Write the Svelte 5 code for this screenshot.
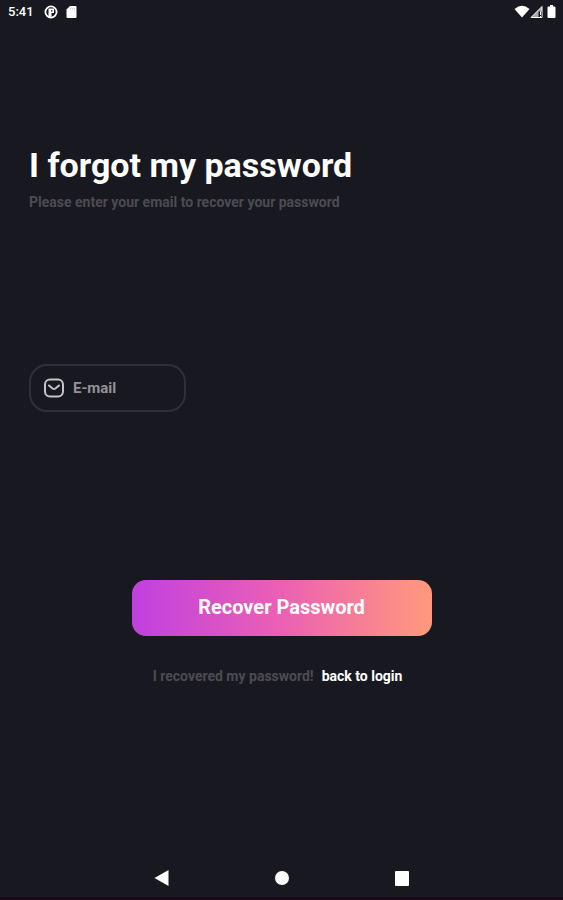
<script>
  let email = '';

  const recover = () => {
    email = email.trim();
  };
</script>

<div class="screen">
  <header class="status-bar">
    <div class="status-group">
      <span class="clock">5:41</span>
      <svg class="app-icon" width="14" height="14" viewBox="0 0 14 14" aria-hidden="true">
        <circle cx="7" cy="7" r="5.6" fill="none" stroke="#fff" stroke-width="1.8" />
        <path d="M4.500 3.500H10v4.500H7.500v4.500h-3z" fill="#fff" />
        <path d="M7 5.300h1.500v1.200H7z" fill="#181820" />
      </svg>
      <svg width="11" height="14" viewBox="0 0 11 14" aria-hidden="true">
        <path d="M4 1h5.500q1 0 1 1v10q0 1-1 1h-8q-1 0-1-1V4.500z" fill="#fff" />
        <path d="M4.300 3v1.600M6.300 3v1.600M8.300 3v1.600" stroke="#aaa" stroke-width="0.7" />
      </svg>
    </div>
    <div class="status-group right">
      <svg width="16" height="14" viewBox="0 0 16 14" aria-hidden="true">
        <path d="M.5 4Q8-2.500 15.500 4L8 12.500z" fill="#fff" />
      </svg>
      <svg width="13" height="14" viewBox="0 0 13 14" aria-hidden="true">
        <path d="M12 1.500v11H1z" fill="#aaa" stroke="#fff" stroke-width="1" />
        <path d="M8.500 6.500h3v5.500h-3z" fill="#181820" />
        <path d="M10.500 6.500v3.500M10.500 11v1.500" stroke="#fff" />
      </svg>
      <svg class="battery" width="9" height="14" viewBox="0 0 9 14" aria-hidden="true">
        <path d="M3 0h3v1.500h1.500q1 0 1 1V12q0 1-1 1h-6q-1 0-1-1V2.500q0-1 1-1H3z" fill="#fff" />
      </svg>
    </div>
  </header>

  <main>
    <h1>I forgot my password</h1>
    <p class="hint">Please enter your email to recover your password</p>

    <form on:submit|preventDefault={recover}>
      <label class="field">
        <svg width="22" height="20" viewBox="0 0 22 20" aria-hidden="true">
          <rect x="2" y="1.500" width="18" height="17" rx="5" />
          <path d="M6 7.500l3.600 3q1.400 1 2.800 0L16 7.500" />
        </svg>
        <input type="email" placeholder="E-mail" aria-label="E-mail" bind:value={email} />
      </label>
      <button class="recover" type="submit">Recover Password</button>
    </form>

    <p class="login">
      <span>I recovered my password!</span>
      <a href="#login">back to login</a>
    </p>
  </main>

  <nav class="nav-bar">
    <button type="button" aria-label="Back">
      <svg width="16" height="18" viewBox="0 0 16 18"><path d="M14.500 1v16L.5 9z" /></svg>
    </button>
    <button type="button" aria-label="Home">
      <svg width="16" height="18" viewBox="0 0 16 18"><circle cx="8" cy="9" r="7" /></svg>
    </button>
    <button type="button" aria-label="Recent apps">
      <svg width="16" height="18" viewBox="0 0 16 18"><rect x="1" y="2" width="14" height="15" rx="1" /></svg>
    </button>
  </nav>
</div>

<style>
  :global(body) {
    margin: 0;
    background: #181820;
  }
  .screen {
    display: flex;
    flex-direction: column;
    box-sizing: border-box;
    min-height: 100vh;
    border-bottom: 3px solid #180818;
    background: #181820;
    color: #fff;
    font-family: Roboto, sans-serif;
    font-weight: 700;
  }
  svg {
    display: block;
    flex: none;
  }
  .status-bar {
    display: flex;
    justify-content: space-between;
    align-items: center;
    height: 24px;
    padding: 0 7px 0 8px;
  }
  .status-group {
    display: flex;
    align-items: center;
    gap: 8px;
  }
  .status-group.right {
    gap: 0;
  }
  .clock {
    font-size: 13px;
    font-weight: 500;
    line-height: 24px;
  }
  .app-icon {
    margin-left: 2px;
  }
  .battery {
    margin-left: 4px;
  }
  main {
    flex: 1;
    padding: 119px 29px 0;
  }
  h1 {
    margin: 0;
    font-size: 34px;
    line-height: 44px;
  }
  p {
    margin: 0;
    font-size: 14px;
    line-height: 20px;
  }
  .hint {
    margin-top: 5px;
    color: #4c4c50;
  }
  form {
    display: flex;
    flex-direction: column;
    margin-top: 152px;
  }
  .field {
    display: flex;
    align-items: center;
    align-self: flex-start;
    gap: 8px;
    box-sizing: border-box;
    width: 157px;
    height: 48px;
    padding: 0 12px;
    border: 2px solid #303036;
    border-radius: 18px;
  }
  .field svg {
    fill: none;
    stroke: #c4c4c6;
    stroke-width: 2;
    stroke-linecap: round;
  }
  .field input {
    flex: 1;
    min-width: 0;
    padding: 0;
    border: 0;
    outline: 0;
    background: none;
    color: #fff;
    font: inherit;
    font-size: 15px;
    line-height: 20px;
  }
  .field input::placeholder {
    color: #929296;
    opacity: 1;
  }
  .recover {
    align-self: center;
    width: 300px;
    height: 56px;
    margin-top: 168px;
    padding: 0 0 2px;
    border: 0;
    border-radius: 14px;
    background: linear-gradient(90deg, #c040e0, #ec60b4 50%, #ff9a7c);
    color: #fff;
    font: inherit;
    font-size: 20px;
    cursor: pointer;
  }
  .login {
    display: flex;
    justify-content: center;
    gap: 8px;
    margin-top: 30px;
    padding-right: 8px;
    color: #4c4c50;
  }
  .login a {
    color: #fff;
    text-decoration: none;
  }
  .nav-bar {
    display: flex;
    justify-content: center;
    gap: 104px;
    padding: 10px 0;
  }
  .nav-bar button {
    padding: 0;
    border: 0;
    background: none;
    cursor: pointer;
  }
  .nav-bar svg {
    fill: #fff;
  }
</style>
